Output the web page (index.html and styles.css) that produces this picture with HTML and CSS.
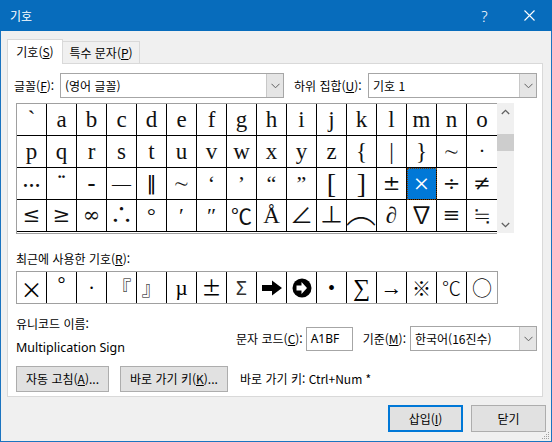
FILE: index.html
```html
<!DOCTYPE html>
<html lang="ko">
<head>
<meta charset="utf-8">
<title>기호</title>
<link rel="stylesheet" href="styles.css">
</head>
<body>
<div class="window">
  <div class="titlebar">
    <div class="title">기호</div>
    <div class="tb-btn help">?</div>
    <div class="tb-btn close">
      <svg width="11" height="11" viewBox="0 0 11 11"><path d="M0.5 0.5 L10.5 10.5 M10.5 0.5 L0.5 10.5" stroke="#fff" stroke-width="1.1" fill="none"/></svg>
    </div>
  </div>

  <div class="tabs">
    <div class="tab active">기호(<u>S</u>)</div>
    <div class="tab">특수 문자(<u>P</u>)</div>
  </div>

  <div class="panel">
    <div class="font-row">
      <span class="lbl lbl-font">글꼴(<u>F</u>):</span>
      <div class="combo combo-font">
        <span class="combo-text">(영어 글꼴)</span>
        <span class="combo-btn"><svg width="9" height="6" viewBox="0 0 9 6"><path d="M0.5 0.8 L4.5 4.8 L8.5 0.8" stroke="#606060" fill="none"/></svg></span>
      </div>
      <span class="lbl lbl-subset">하위 집합(<u>U</u>):</span>
      <div class="combo combo-subset">
        <span class="combo-text">기호 1</span>
        <span class="combo-btn"><svg width="9" height="6" viewBox="0 0 9 6"><path d="M0.5 0.8 L4.5 4.8 L8.5 0.8" stroke="#606060" fill="none"/></svg></span>
      </div>
    </div>

    <div class="charmap">
      <div class="grid">
        <div class="c grave">`</div><div class="c">a</div><div class="c">b</div><div class="c">c</div><div class="c">d</div><div class="c">e</div><div class="c">f</div><div class="c">g</div><div class="c">h</div><div class="c">i</div><div class="c">j</div><div class="c">k</div><div class="c">l</div><div class="c">m</div><div class="c">n</div><div class="c last">o</div>
        <div class="c">p</div><div class="c">q</div><div class="c">r</div><div class="c">s</div><div class="c">t</div><div class="c">u</div><div class="c">v</div><div class="c">w</div><div class="c">x</div><div class="c">y</div><div class="c">z</div><div class="c">{</div><div class="c">|</div><div class="c">}</div><div class="c sym sm">∼</div><div class="c last sym sm">·</div>
        <div class="c sym ell">…</div><div class="c sym diaer">¨</div><div class="c sym hy">-</div><div class="c sym em">—</div><div class="c dbar">‖</div><div class="c sym sm">∼</div><div class="c sym q">‘</div><div class="c sym q">’</div><div class="c sym q">“</div><div class="c sym q">”</div><div class="c br">[</div><div class="c br">]</div><div class="c big">±</div><div class="c sym sel">×</div><div class="c big">÷</div><div class="c last big">≠</div>
        <div class="c big">≤</div><div class="c big">≥</div><div class="c big">∞</div><div class="c sym">∴</div><div class="c sym q">°</div><div class="c sym q">′</div><div class="c sym q">″</div><div class="c sym cel">℃</div><div class="c">Å</div><div class="c sym">∠</div><div class="c sym">⊥</div><div class="c arc"><span class="arc-g">⌒</span></div><div class="c sym">∂</div><div class="c sym">∇</div><div class="c big">≡</div><div class="c last sym">≒</div>
      </div>
      <div class="vscroll">
        <div class="sb-arrow"><svg width="9" height="6" viewBox="0 0 9 6"><path d="M0.8 5 L4.5 1.3 L8.2 5" stroke="#606060" stroke-width="1.3" fill="none"/></svg></div>
        <div class="sb-thumb"></div>
        <div class="sb-space"></div>
        <div class="sb-arrow"><svg width="9" height="6" viewBox="0 0 9 6"><path d="M0.8 1 L4.5 4.7 L8.2 1" stroke="#606060" stroke-width="1.3" fill="none"/></svg></div>
      </div>
    </div>

    <div class="recent-label">최근에 사용한 기호(<u>R</u>):</div>
    <div class="recent">
      <div class="r cj times">×</div>
      <div class="r deg">°</div>
      <div class="r">·</div>
      <div class="r cjk">『</div>
      <div class="r cjk">』</div>
      <div class="r mu">µ</div>
      <div class="r cj pm">±</div>
      <div class="r sig">Σ</div>
      <div class="r"><svg width="22" height="16" viewBox="0 0 22 16"><path d="M1 5 H11 V0.5 L21 8 L11 15.5 V11 H1 Z" fill="#000"/></svg></div>
      <div class="r"><svg width="20" height="20" viewBox="0 0 20 20"><circle cx="10" cy="10" r="9.5" fill="#000"/><path d="M4.5 7.5 H9.5 V4 L15 10 L9.5 16 V12.5 H4.5 Z" fill="#fff"/></svg></div>
      <div class="r">•</div>
      <div class="r sum">∑</div>
      <div class="r arrow">→</div>
      <div class="r cj kome">※</div>
      <div class="r cj celr">℃</div>
      <div class="r cj last circ">○</div>
    </div>

    <div class="info">
      <div class="uname">
        <div class="uname-lbl">유니코드 이름:</div>
        <div class="uname-val">Multiplication Sign</div>
      </div>
      <div class="code-group">
        <span class="lbl">문자 코드(<u>C</u>):</span>
        <div class="input">A1BF</div>
        <span class="lbl lbl-base">기준(<u>M</u>):</span>
        <div class="combo combo-base">
          <span class="combo-text">한국어(16진수)</span>
          <span class="combo-btn"><svg width="9" height="6" viewBox="0 0 9 6"><path d="M0.5 0.8 L4.5 4.8 L8.5 0.8" stroke="#606060" fill="none"/></svg></span>
        </div>
      </div>
    </div>

    <div class="actions">
      <div class="btn btn-auto">자동 고침(<u>A</u>)...</div>
      <div class="btn btn-key">바로 가기 키(<u>K</u>)...</div>
      <span class="shortcut">바로 가기 키: Ctrl+Num *</span>
    </div>
  </div>

  <div class="footer">
    <div class="btn btn-foot default">삽입(<u>I</u>)</div>
    <div class="btn btn-foot">닫기</div>
  </div>

  <svg class="grip" width="10" height="10" viewBox="0 0 10 10">
    <rect x="8" y="2" width="1" height="1" fill="#a0a0a0"/>
    <rect x="6" y="4" width="1" height="1" fill="#a0a0a0"/>
    <rect x="8" y="4" width="1" height="1" fill="#a0a0a0"/>
    <rect x="4" y="6" width="1" height="1" fill="#a0a0a0"/>
    <rect x="6" y="6" width="1" height="1" fill="#a0a0a0"/>
    <rect x="8" y="6" width="1" height="1" fill="#a0a0a0"/>
    <rect x="2" y="8" width="1" height="1" fill="#a0a0a0"/>
    <rect x="4" y="8" width="1" height="1" fill="#a0a0a0"/>
    <rect x="6" y="8" width="1" height="1" fill="#a0a0a0"/>
    <rect x="8" y="8" width="1" height="1" fill="#a0a0a0"/>
  </svg>
</div>
</body>
</html>
```
FILE: styles.css
```css
* { box-sizing: border-box; }
html, body { margin: 0; padding: 0; }
body {
  width: 552px;
  height: 442px;
  overflow: hidden;
  background: #f0f0f0;
  font-family: "Noto Sans CJK KR", "Noto Sans", sans-serif;
  font-size: 12px;
  line-height: 16px;
  color: #000;
}
u { text-decoration: underline; text-underline-offset: 1px; }

.window {
  position: relative;
  width: 552px;
  height: 442px;
  border: 1px solid #1b74c0;
  border-top: 0;
  background: #f0f0f0;
  display: flex;
  flex-direction: column;
}

.titlebar {
  height: 31px;
  margin: 0 -1px;
  background: #076cbc;
  color: #fff;
  display: flex;
  align-items: center;
  flex: none;
}
.title { flex: 1; padding-left: 10px; font-size: 12px; }
.tb-btn {
  width: 46px;
  height: 31px;
  display: flex;
  align-items: center;
  justify-content: center;
}
.help { font-family: "Noto Sans", sans-serif; font-size: 15px; font-weight: 300; padding-left: 3px; }

.tabs {
  position: relative;
  z-index: 1;
  display: flex;
  align-items: flex-end;
  height: 24px;
  margin: 8px 0 0 6px;
  flex: none;
}
.tab {
  height: 22px;
  border: 1px solid #d9d9d9;
  border-bottom: 0;
  background: #f0f0f0;
  display: flex;
  align-items: center;
  justify-content: center;
  width: 77px;
  border-left: 0;
}
.tab.active {
  width: 56px;
  height: 25px;
  margin-bottom: -1px;
  background: #fff;
  border-left: 1px solid #d9d9d9;
}

.panel {
  width: 536px;
  height: 334px;
  margin-left: 6px;
  flex: none;
  background: #fff;
  border: 1px solid #d9d9d9;
  padding: 9px 5px 0 6px;
  display: flex;
  flex-direction: column;
}

.font-row { display: flex; align-items: center; height: 25px; }
.lbl { white-space: nowrap; }
.lbl-font { width: 46px; }
.lbl-subset { width: 74px; margin-left: 10px; }

.combo {
  height: 25px;
  border: 1px solid #a6a6a6;
  background: #fff;
  display: flex;
  align-items: stretch;
}
.combo-font { width: 224px; }
.combo-subset { width: 169px; }
.combo-base { width: 127px; }
.combo-text { flex: 1; padding-left: 4px; display: flex; align-items: center; white-space: nowrap; }
.combo-btn {
  width: 17px;
  background: #e5e5e5;
  border-left: 1px solid #c8c8c8;
  display: flex;
  align-items: center;
  justify-content: center;
}

.charmap {
  display: flex;
  margin: 5px 0 0 2px;
  height: 131px;
}
.grid {
  display: grid;
  grid-template-columns: repeat(16, 30px);
  grid-template-rows: repeat(4, 32px);
  border: 1px solid #a0a0a0;
  border-right: 0;
  padding-bottom: 1px;
  background: #fff;
}
.c {
  border-right: 1px solid #000;
  border-bottom: 1px solid #000;
  display: flex;
  align-items: center;
  justify-content: center;
  font-family: "Liberation Serif", "DejaVu Serif", serif;
  font-size: 23px;
  line-height: 31px;
  color: #111;
  overflow: hidden;
}
.c.last { border-right: 0; }
.c.sym { font-family: "Liberation Serif", "Noto Sans CJK KR", serif; font-size: 23px; }
.c.big { font-family: "DejaVu Serif", serif; font-size: 21px; font-weight: 300; }
.c.sm { font-size: 21px; }
.c.em { font-size: 19px; }
.c.ell { align-items: flex-end; font-weight: bold; font-size: 18px; padding-bottom: 2px; }
.c.diaer { align-items: flex-start; font-weight: bold; }
.c.hy { font-weight: bold; font-size: 24px; }
.c.q { align-items: flex-start; font-size: 22px; }
.c.br { font-size: 28px; }
.c.dbar { font-family: "DejaVu Sans", sans-serif; font-size: 20px; color: #000; }
.c.cel { font-family: "Noto Sans CJK KR", sans-serif; font-size: 21px; }
.c.grave { align-items: flex-start; }
.c.arc { align-items: flex-start; overflow: visible; }
.arc-g {
  display: block;
  font-family: "Noto Sans CJK KR", sans-serif;
  font-size: 26px;
  font-weight: 300;
  line-height: 31px;
  transform-origin: 50% 4px;
  transform: translateY(12px) scale(1.15, 1.4);
}
.c.sel {
  background: #0078d7;
  color: #fff;
  outline: 1px dotted #7a3d00;
  outline-offset: -1px;
  font-size: 28px;
}

.vscroll {
  width: 17px;
  height: 130px;
  background: #f0f0f0;
  display: flex;
  flex-direction: column;
}
.sb-arrow { height: 17px; display: flex; align-items: center; justify-content: center; }
.sb-thumb { height: 17px; margin: 14px 0 0 0; background: #cdcdcd; }
.sb-space { flex: 1; }

.recent-label { margin-top: 17px; height: 16px; padding-left: 2px; }
.recent {
  display: grid;
  grid-template-columns: repeat(16, 30px);
  height: 33px;
  width: 482px;
  margin: 4px 0 0 2px;
  border: 1px solid #a0a0a0;
}
.r {
  border-right: 1px solid #000;
  display: flex;
  align-items: center;
  justify-content: center;
  font-family: "Liberation Serif", "Noto Sans CJK KR", serif;
  font-size: 20px;
  overflow: hidden;
}
.r.last { border-right: 0; }
.r.cj { font-family: "Noto Sans CJK KR", sans-serif; }
.r.times { font-size: 22px; }
.r.pm { font-size: 20px; }
.r.cjk { font-family: "Noto Sans CJK KR", sans-serif; font-size: 20px; font-weight: 300; }
.r.deg { align-items: flex-start; padding-top: 4px; }
.r.mu { font-size: 21px; }
.r.sig { font-family: "Noto Sans", sans-serif; font-size: 19px; color: #333; }
.r.sum { font-size: 24px; }
.r.arrow { font-size: 22px; }
.r.kome { font-size: 19px; }
.r.celr { font-size: 19px; font-weight: 300; }
.r.circ { font-size: 20px; font-weight: 300; }

.info { display: flex; margin-top: 12px; height: 40px; padding-left: 2px; }
.uname-val { margin-top: 8px; font-family: "Noto Sans", sans-serif; font-size: 12.5px; }
.code-group { margin-left: auto; margin-top: 10px; display: flex; align-items: center; height: 25px; }
.input {
  width: 47px;
  height: 24px;
  margin-left: 3px;
  border: 1px solid #a6a6a6;
  padding-left: 4px;
  display: flex;
  align-items: center;
  font-family: "Noto Sans", sans-serif;
}
.lbl-base { margin-left: 10px; margin-right: 4px; }

.actions { display: flex; align-items: center; margin-top: 10px; padding-left: 2px; }
.btn {
  height: 26px;
  background: #e1e1e1;
  border: 1px solid #adadad;
  display: flex;
  align-items: center;
  justify-content: center;
  white-space: nowrap;
}
.btn-auto { width: 93px; }
.btn-key { width: 108px; margin-left: 11px; }
.shortcut { margin-left: 12px; }

.footer {
  display: flex;
  justify-content: flex-end;
  gap: 8px;
  margin-top: 8px;
  padding-right: 5px;
}
.btn-foot { width: 75px; height: 27px; }
.btn-foot.default { border: 2px solid #0078d7; }

.grip { position: absolute; right: 1px; bottom: 1px; }
```
